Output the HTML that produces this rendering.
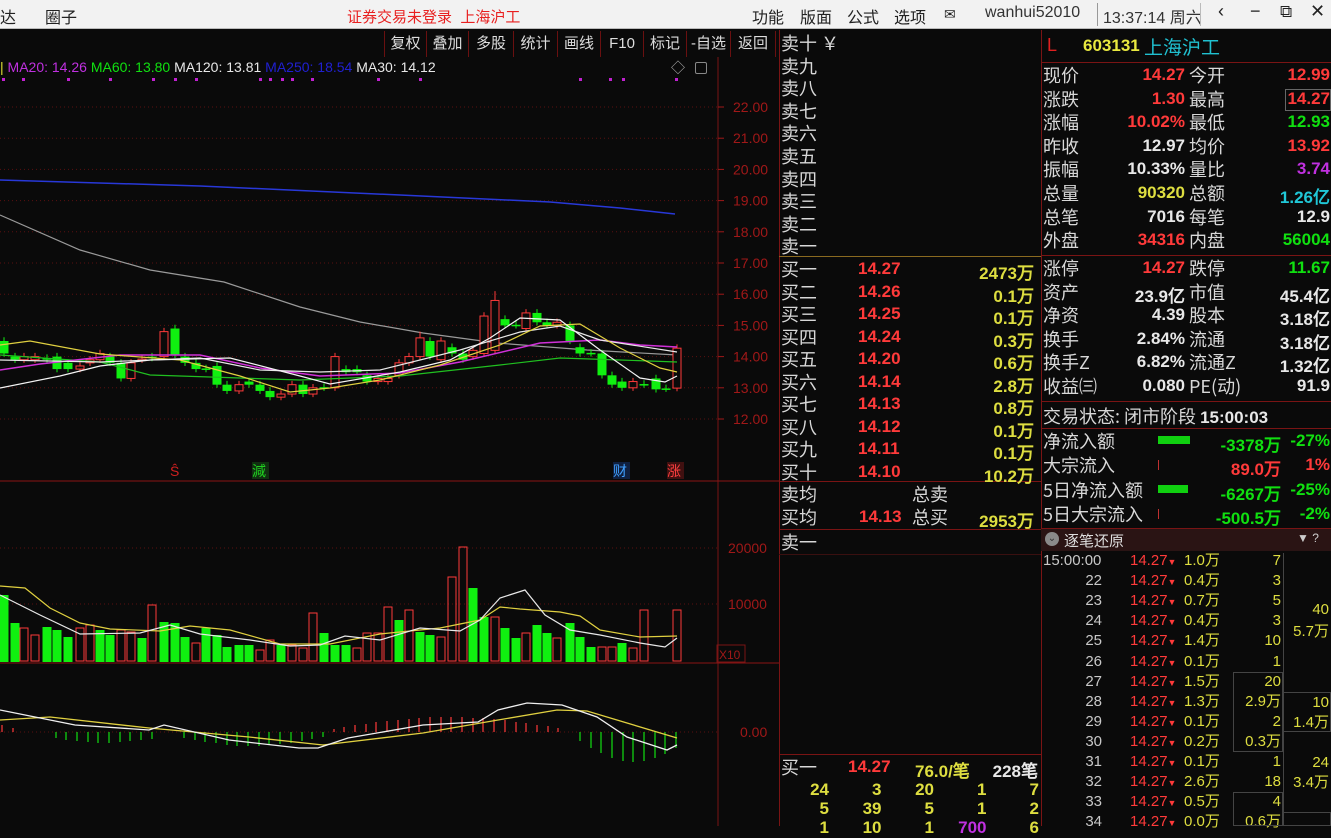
<!DOCTYPE html>
<html><head><meta charset="utf-8">
<style>
*{margin:0;padding:0;box-sizing:border-box}
body{width:1331px;height:826px;overflow:hidden;background:#0a0a0a;font-family:"Liberation Sans","Noto Sans CJK SC",sans-serif;position:relative;color:#d8d8d8}
.a{position:absolute;white-space:nowrap}
#top{position:absolute;left:0;top:0;width:1331px;height:29px;background:#f2f2f2;border-bottom:1px solid #bbb;color:#222;font-size:16px}
#top .a{top:4px}
.tb{position:absolute;top:31px;height:26px;border-left:1px solid #6a1010;font-size:15px;color:#ddd;text-align:center;line-height:26px}
.cn{font-family:"Noto Sans CJK SC","WenQuanYi Zen Hei",sans-serif}
.lbl{font-size:18px;color:#d8d8d8;font-family:"Noto Sans CJK SC",sans-serif;line-height:22px}
.num{font-family:"Liberation Sans Narrow","Liberation Sans",sans-serif;font-weight:bold;font-size:17px}
.r{color:#ff3a3a}.g{color:#10e010}.y{color:#dede40}.w{color:#e8e8e8}.c{color:#20c8d8}.m{color:#c030e0}
.hl{position:absolute;height:1px;background:#7a1414}
.vl{position:absolute;width:1px;background:#7a1414}
.t{font-family:"Liberation Sans Narrow","Liberation Sans",sans-serif;font-size:15px;line-height:20px}
</style></head><body>
<div id="top">
<span class="a" style="left:0">达</span>
<span class="a" style="left:45px">圈子</span>
<span class="a" style="left:347px;color:#e82020;font-size:15px;top:6px">证券交易未登录&nbsp;&nbsp;上海沪工</span>
<span class="a" style="left:752px">功能</span>
<span class="a" style="left:800px">版面</span>
<span class="a" style="left:847px">公式</span>
<span class="a" style="left:894px">选项</span>
<span class="a" style="left:944px;font-size:14px;top:6px">✉</span>
<span class="a" style="left:985px;color:#333">wanhui52010</span>
<div style="position:absolute;left:1097px;top:3px;width:1px;height:23px;background:#999"></div>
<span class="a" style="left:1103px;color:#333">13:37:14 周六</span>
<div style="position:absolute;left:1200px;top:3px;width:1px;height:23px;background:#bbb"></div>
<span class="a" style="left:1218px;font-size:18px;top:1px">‹</span>
<span class="a" style="left:1250px;font-size:18px;top:1px">−</span>
<span class="a" style="left:1280px;top:2px;font-size:17px">⧉</span>
<span class="a" style="left:1310px;font-size:18px;top:1px">✕</span>
</div>

<!-- toolbar -->
<div class="tb" style="left:384px;width:42px">复权</div>
<div class="tb" style="left:426px;width:42px">叠加</div>
<div class="tb" style="left:468px;width:45px">多股</div>
<div class="tb" style="left:513px;width:44px">统计</div>
<div class="tb" style="left:557px;width:43px">画线</div>
<div class="tb" style="left:600px;width:43px">F10</div>
<div class="tb" style="left:643px;width:43px">标记</div>
<div class="tb" style="left:686px;width:44px">-自选</div>
<div class="tb" style="left:730px;width:46px;border-right:1px solid #6a1010">返回</div>

<!-- legend -->
<div class="a" style="left:0;top:59px;font-size:14px;font-family:'Liberation Sans Narrow','Liberation Sans',sans-serif">
<span style="color:#dd3">|</span> <span class="m">MA20: 14.26</span> <span class="g">MA60: 13.80</span> <span class="w">MA120: 13.81</span> <span style="color:#2020d0">MA250: 18.54</span> <span class="w">MA30: 14.12</span></div>
<span class="a" style="left:671px;top:58px;color:#aaa;font-size:14px">◇</span>
<div class="a" style="left:695px;top:62px;width:12px;height:12px;border:1px solid #888;border-radius:2px"></div>

<svg class="a" style="left:0;top:0" width="780" height="826" id="ch">
<line x1="718" y1="57" x2="718" y2="826" stroke="#7a1414"/>
<line x1="0" y1="481" x2="779" y2="481" stroke="#8a1414"/>
<line x1="0" y1="663" x2="779" y2="663" stroke="#8a1414"/>
<g id="grid" stroke="#5a1010" stroke-dasharray="1,3"></g>
<g id="ax" fill="#a01818" font-size="14" font-family="Liberation Sans Narrow, Liberation Sans, sans-serif"></g>
<polyline fill="none" stroke="#2838d8" stroke-width="1.5" points="0,180 200,186 400,195 550,202 620,208 675,214"/>
<polyline fill="none" stroke="#9a9a9a" stroke-width="1.2" points="0,215 80,250 150,270 224,282 300,307 360,322 423,333 497,343 587,350 677,355"/>
<g id="candles"></g>
<polyline fill="none" stroke="#20c020" stroke-width="1.2" points="0,355 100,362 150,375 300,380 400,376 500,365 560,358 620,360 677,362"/>
<polyline fill="none" stroke="#d030d8" stroke-width="1.5" points="0,370 40,364 120,355 200,355 260,368 320,376 400,373 460,362 540,343 600,340 640,345 677,347"/>
<polyline fill="none" stroke="#e8e8e8" stroke-width="1.2" points="0,360 100,362 200,358 260,370 320,372 380,370 460,350 520,332 560,326 600,340 677,352"/>
<polyline fill="none" stroke="#e0d040" stroke-width="1.2" points="0,345 30,341 100,354 180,360 240,376 290,392 330,388 380,380 440,365 500,345 540,326 580,324 620,348 660,368 677,372"/>
<polyline fill="none" stroke="#f4f4f4" stroke-width="1.2" points="0,388 60,376 100,366 150,360 230,358 300,376 330,384 400,372 450,360 490,338 520,318 560,320 600,350 640,378 665,382 677,376"/>
<g id="dots" fill="#c020d0"></g>
<text x="170" y="476" fill="#d02020" font-size="14">Ŝ</text>
<rect x="252" y="462" width="17" height="17" fill="#103010"/><text x="252" y="476" fill="#20d020" font-size="14" class="cn">減</text>
<rect x="613" y="462" width="17" height="17" fill="#102040"/><text x="613" y="476" fill="#40a0ff" font-size="14" class="cn">财</text>
<rect x="667" y="462" width="17" height="17" fill="#401010"/><text x="667" y="476" fill="#ff4040" font-size="14" class="cn">涨</text>
<g id="vol"></g>
<polyline fill="none" stroke="#e0d040" stroke-width="1.2" points="0,586 25,588 50,608 80,623 110,629 160,631 190,626 230,630 280,644 330,644 380,634 440,628 480,620 500,607 520,609 560,612 580,616 600,630 640,637 677,636"/>
<polyline fill="none" stroke="#e8e8e8" stroke-width="1.2" points="0,595 40,615 80,634 140,633 170,625 200,634 250,640 290,646 320,645 345,636 380,640 420,628 460,631 480,620 500,598 525,590 545,615 570,630 600,635 640,643 665,647 677,638"/>
<rect x="717" y="645" width="28" height="17" fill="none" stroke="#7a1414"/>
<text x="719" y="659" fill="#a01818" font-size="12">X10</text>
<g id="macd"></g>
<polyline fill="none" stroke="#e0d040" stroke-width="1.3" points="0,720 50,717 149,728 249,737 323,745 423,733 498,720 557,710 587,711 677,738"/>
<polyline fill="none" stroke="#f0f0f0" stroke-width="1.3" points="0,710 75,725 149,730 164,725 229,740 299,748 318,748 348,738 423,725 478,722 498,710 527,703 562,705 597,717 627,737 667,750 677,745"/>
</svg>

<!-- order book -->
<div class="vl" style="left:779px;top:30px;height:796px"></div>
<div class="vl" style="left:1041px;top:30px;height:796px"></div>
<div class="hl" style="left:779px;top:256px;width:262px;background:#8a6a20"></div>
<div class="hl" style="left:779px;top:481px;width:262px"></div>
<div class="hl" style="left:779px;top:529px;width:262px"></div>
<div class="hl" style="left:779px;top:554px;width:262px;background:#3a1010"></div>
<div class="hl" style="left:779px;top:754px;width:262px"></div>
<div id="ob"></div>

<!-- right panel -->
<div class="a" style="left:1047px;top:35px;font-size:18px;color:#e02020">L</div>
<div class="a num" style="left:1083px;top:36px;color:#e8e840">603131</div>
<div class="a cn" style="left:1144px;top:33px;font-size:19px;color:#20c0d0">上海沪工</div>
<div class="hl" style="left:1041px;top:62px;width:290px"></div>
<div class="hl" style="left:1041px;top:255px;width:290px"></div>
<div class="hl" style="left:1041px;top:401px;width:290px"></div>
<div class="hl" style="left:1041px;top:428px;width:290px"></div>
<div class="hl" style="left:1041px;top:528px;width:290px"></div>
<div id="rp"></div>
<div class="a lbl" style="left:1043px;top:405px">交易状态: 闭市阶段 <span class="num w">15:00:03</span></div>
<div style="position:absolute;left:1041px;top:529px;width:290px;height:22px;background:#2a1414"></div>
<div class="a" style="left:1045px;top:532px;width:14px;height:14px;border-radius:7px;background:#8a8a8a;color:#333;font-size:10px;text-align:center;line-height:14px">⌄</div>
<div class="a cn" style="left:1064px;top:530px;font-size:15px;color:#ddd">逐笔还原</div>
<div class="a" style="left:1297px;top:531px;font-size:12px;color:#ccc">▼ ?</div>
<div id="tk"></div>

<script>
// grid & axis
var g=document.getElementById('grid'),ax=document.getElementById('ax'),s='',a='';
var prices=[22,21,20,19,18,17,16,15,14,13,12];
prices.forEach(function(p,i){var y=107+i*31.2;s+='<line x1="0" y1="'+y+'" x2="718" y2="'+y+'"/>';a+='<line x1="718" y1="'+y+'" x2="724" y2="'+y+'" stroke="#a01818"/><text x="733" y="'+(y+5)+'">'+p.toFixed(2)+'</text>';});
[548,604].forEach(function(y,i){s+='<line x1="0" y1="'+y+'" x2="718" y2="'+y+'"/>';a+='<text x="728" y="'+(y+5)+'">'+(i?'10000':'20000')+'</text>';});
s+='<line x1="0" y1="732" x2="718" y2="732"/>';a+='<text x="740" y="737">0.00</text>';
g.innerHTML=s;ax.innerHTML=a;
function Y(p){return 107+(22-p)*31.2;}
var C=[[4,14.5,14.1],[15,14.0,13.9],[24,13.9,14.0],[35,13.9,14.0],[47,13.95,13.9],[57,14.0,13.6],[68,13.8,13.6],[80,13.6,13.7],[90,13.8,13.9],[100,13.9,14.1],[110,14.0,13.8],[121,13.8,13.3],[131,13.3,13.8],[142,13.9,13.92],[152,14.0,13.95],[164,14.0,14.8],[175,14.9,14.05],[185,14.0,13.8],[196,13.8,13.6],[206,13.62,13.6],[217,13.7,13.1],[227,13.1,12.9],[239,12.9,13.1],[249,13.2,13.1],[260,13.1,12.9],[270,12.9,12.7],[281,12.7,12.8],[292,12.8,13.1],[303,13.1,12.8],[313,12.8,13.0],[324,13.02,13.0],[335,13.0,14.0],[346,13.6,13.5],[357,13.6,13.5],[367,13.4,13.2],[378,13.2,13.3],[388,13.2,13.3],[399,13.4,13.8],[409,13.8,14.0],[420,14.0,14.6],[430,14.5,14.0],[441,13.9,14.5],[452,14.3,14.1],[463,14.1,13.9],[473,14.0,14.2],[484,14.1,15.3],[495,14.2,15.8],[505,15.2,15.0],[516,15.02,15.0],[526,14.9,15.4],[537,15.4,15.1],[547,15.1,15.0],[557,15.0,15.1],[570,15.0,14.5],[580,14.3,14.1],[591,14.12,14.1],[602,14.1,13.4],[612,13.4,13.1],[622,13.2,13.0],[633,13.0,13.2],[644,13.12,13.1],[656,13.3,12.95],[666,12.98,12.97],[677,12.99,14.27]];
var h='';C.forEach(function(c){var x=c[0],o=c[1],cl=c[2],up=cl>=o,col=up?'#ff3a3a':'#10f010';var t=Y(Math.max(o,cl)),b=Y(Math.min(o,cl));var hi=Math.max(o,cl)+0.12,lo=Math.min(o,cl)-0.1;if(x==495)hi=16.1;if(x==420)hi=14.8;
h+='<line x1="'+x+'" y1="'+Y(hi)+'" x2="'+x+'" y2="'+Y(lo)+'" stroke="'+col+'"/>';
var hh=Math.max(b-t,1.5);h+=up?'<rect x="'+(x-4)+'" y="'+t+'" width="8" height="'+hh+'" fill="#0a0a0a" stroke="'+col+'"/>':'<rect x="'+(x-4.5)+'" y="'+t+'" width="9" height="'+hh+'" fill="'+col+'"/>';});
document.getElementById('candles').innerHTML=h;
var d='';[2,22,67,109,152,174,195,259,269,281,291,311,377,419,579,609,622,675].forEach(function(x){d+='<rect x="'+x+'" y="78" width="3" height="3"/>';});document.getElementById('dots').innerHTML=d;
var V=[[4,595,0],[15,623,0],[24,628,1],[35,635,1],[47,627,0],[57,630,0],[68,637,0],[80,628,1],[90,625,1],[100,630,0],[110,635,0],[121,630,1],[131,632,1],[142,638,0],[152,605,1],[164,622,0],[175,623,0],[185,637,0],[196,643,1],[206,628,0],[217,635,0],[227,647,0],[239,645,0],[249,645,0],[260,650,1],[270,640,1],[281,645,0],[292,645,1],[303,648,1],[313,613,1],[324,633,0],[335,645,0],[346,645,0],[357,648,1],[367,633,1],[378,633,1],[388,607,1],[399,620,0],[409,610,1],[420,632,0],[430,635,0],[441,637,1],[452,577,1],[463,547,1],[473,588,0],[484,617,0],[495,617,1],[505,628,0],[516,638,0],[526,633,1],[537,625,0],[547,633,0],[557,638,1],[570,623,0],[580,637,0],[591,647,0],[602,647,1],[612,647,1],[622,643,0],[633,648,1],[644,610,1]];
var v='';V.forEach(function(b){var col=b[2]?'#ff3a3a':'#10f010';v+=b[2]?'<rect x="'+(b[0]-4)+'" y="'+b[1]+'" width="8" height="'+(661-b[1])+'" fill="none" stroke="'+col+'"/>':'<rect x="'+(b[0]-4.5)+'" y="'+b[1]+'" width="9" height="'+(662-b[1])+'" fill="'+col+'"/>';});
v+='<rect x="673" y="610" width="8" height="51" fill="none" stroke="#ff3a3a"/>';
document.getElementById('vol').innerHTML=v;
var m='';for(var x=2;x<680;x+=10.7){var vv=0;if(x<25)vv=-8+x*0.3;else if(x>55&&x<155)vv=6+Math.sin((x-55)/100*Math.PI)*5;else if(x>180&&x<325)vv=5+Math.sin((x-180)/145*Math.PI)*9;else if(x>333&&x<565)vv=-3-Math.sin((x-333)/232*Math.PI)*12;else if(x>578)vv=8+Math.sin((x-578)/100*Math.PI*0.9)*22;
if(Math.abs(vv)>1)m+='<line x1="'+x.toFixed(0)+'" y1="732" x2="'+x.toFixed(0)+'" y2="'+(732+vv).toFixed(0)+'" stroke="'+(vv<0?'#ff3a3a':'#10e010')+'" stroke-width="1.2"/>';}
document.getElementById('macd').innerHTML=m;
// order book
var ob='',sl=['十','九','八','七','六','五','四','三','二','一'];
sl.forEach(function(n,i){ob+='<div class="a lbl" style="left:781px;top:'+(32+i*22.6)+'px">卖'+n+(i==0?' ￥':'')+'</div>';});
var bl=[['一','14.27','2473万'],['二','14.26','0.1万'],['三','14.25','0.1万'],['四','14.24','0.3万'],['五','14.20','0.6万'],['六','14.14','2.8万'],['七','14.13','0.8万'],['八','14.12','0.1万'],['九','14.11','0.1万'],['十','14.10','10.2万']];
bl.forEach(function(b,i){var t=258+i*22.5;ob+='<div class="a lbl" style="left:781px;top:'+t+'px">买'+b[0]+'</div><div class="a num r" style="left:858px;top:'+(t+1)+'px">'+b[1]+'</div><div class="a num y" style="right:297px;top:'+(t+1)+'px">'+b[2]+'</div>';});
ob+='<div class="a lbl" style="left:781px;top:483px">卖均</div><div class="a lbl" style="left:912px;top:483px">总卖</div>';
ob+='<div class="a lbl" style="left:781px;top:506px">买均</div><div class="a num r" style="left:859px;top:507px">14.13</div><div class="a lbl" style="left:912px;top:506px">总买</div><div class="a num y" style="right:297px;top:507px">2953万</div>';
ob+='<div class="a lbl" style="left:781px;top:531px">卖一</div>';
ob+='<div class="a lbl" style="left:781px;top:756px">买一</div><div class="a num r" style="left:848px;top:757px">14.27</div><div class="a num y" style="left:915px;top:757px">76.0/笔</div><div class="a num w" style="right:293px;top:757px">228笔</div>';
var rows=[['24','3','20','1','7'],['5','39','5','1','2'],['1','10','1','700','6']];
rows.forEach(function(r,i){r.forEach(function(v,j){ob+='<div class="a num '+(i==2&&j==3?'m':'y')+'" style="right:'+(1331-829-j*52.5)+'px;top:'+(780+i*19)+'px">'+v+'</div>';});});
document.getElementById('ob').innerHTML=ob;
// right panel
var rp='',R=[['现价','14.27','r','今开','12.99','r'],['涨跌','1.30','r','最高','14.27','r'],['涨幅','10.02%','r','最低','12.93','g'],['昨收','12.97','w','均价','13.92','r'],['振幅','10.33%','w','量比','3.74','m'],['总量','90320','y','总额','1.26亿','c'],['总笔','7016','w','每笔','12.9','w'],['外盘','34316','r','内盘','56004','g'],
['涨停','14.27','r','跌停','11.67','g'],['资产','23.9亿','w','市值','45.4亿','w'],['净资','4.39','w','股本','3.18亿','w'],['换手','2.84%','w','流通','3.18亿','w'],['换手Z','6.82%','w','流通Z','1.32亿','w'],['收益㈢','0.080','w','PE(动)','91.9','w']];
R.forEach(function(r,i){var t=i<8?64+i*23.6:257+(i-8)*23.6;rp+='<div class="a lbl" style="left:1043px;top:'+t+'px">'+r[0]+'</div><div class="a num '+r[2]+'" style="right:146px;top:'+(t+1)+'px">'+r[1]+'</div><div class="a lbl" style="left:1189px;top:'+t+'px">'+r[3]+'</div><div class="a num '+r[5]+'" style="right:1px;top:'+(t+1)+'px">'+r[4]+'</div>';});
rp+='<div class="a" style="left:1285px;top:89px;width:46px;height:22px;border:1px solid #666"></div>';
var F=[['净流入额',32,'-3378万','-27%','g'],['大宗流入',2,'89.0万','1%','r'],['5日净流入额',30,'-6267万','-25%','g'],['5日大宗流入',2,'-500.5万','-2%','g']];
F.forEach(function(f,i){var t=430+i*24.3;rp+='<div class="a lbl" style="left:1043px;top:'+t+'px">'+f[0]+'</div><div class="a" style="left:1158px;top:'+(t+6)+'px;width:'+(f[1]==2?1:f[1])+'px;height:'+(f[1]==2?10:8)+'px;background:'+(f[1]==2?'#c03030':'#10d010')+'"></div><div class="a num '+f[4]+'" style="right:50px;top:'+(t+1)+'px">'+f[2]+'</div><div class="a num '+f[4]+'" style="right:1px;top:'+(t+1)+'px">'+f[3]+'</div>';});
document.getElementById('rp').innerHTML=rp;
var tk='',T=[['15:00:00','1.0万','7'],['22','0.4万','3'],['23','0.7万','5'],['24','0.4万','3'],['25','1.4万','10'],['26','0.1万','1'],['27','1.5万','20'],['28','1.3万','2.9万'],['29','0.1万','2'],['30','0.2万','0.3万'],['31','0.1万','1'],['32','2.6万','18'],['33','0.5万','4'],['34','0.0万','0.6万']];
T.forEach(function(r,i){var t=551+i*20.1;tk+='<div class="a t" style="'+(i==0?'left:1043px':'right:229px')+';top:'+t+'px;color:#c8c8c8">'+r[0]+'</div><div class="a t r" style="left:1130px;top:'+t+'px">14.27<span style="font-size:9px">▼</span></div><div class="a t y" style="left:1184px;top:'+t+'px">'+r[1]+'</div><div class="a t y" style="right:50px;top:'+t+'px">'+r[2]+'</div>';});
[['40',600],['5.7万',622],['10',693],['1.4万',713],['24',753],['3.4万',773]].forEach(function(q){tk+='<div class="a t y" style="right:2px;top:'+q[1]+'px">'+q[0]+'</div>';});
tk+='<div class="a" style="left:1283px;top:553px;width:1px;height:273px;background:#444"></div><div class="a" style="left:1233px;top:672px;width:50px;height:80px;border:1px solid #444"></div><div class="a" style="left:1233px;top:792px;width:50px;height:34px;border:1px solid #444"></div><div class="a" style="left:1283px;top:692px;width:48px;height:40px;border:1px solid #444"></div><div class="a" style="left:1283px;top:812px;width:48px;height:14px;border:1px solid #444"></div>';
document.getElementById('tk').innerHTML=tk;
</script>
</body></html>
